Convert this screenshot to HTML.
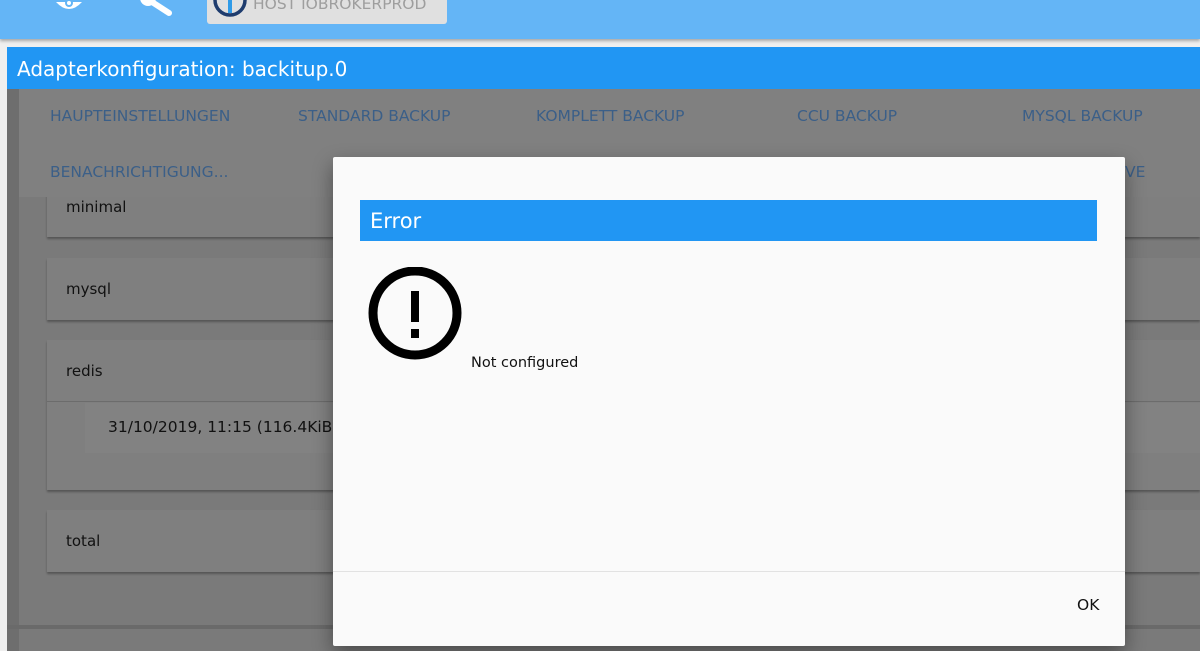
<!DOCTYPE html>
<html><head><meta charset="utf-8"><style>
*{margin:0;padding:0;box-sizing:border-box}
body{width:1200px;height:651px;overflow:hidden;position:relative;background:#efefef;font-family:"DejaVu Sans","Liberation Sans",sans-serif}
.a{position:absolute}
.top{left:0;top:0;width:1200px;height:39px;background:#64b5f6;box-shadow:0 2px 3px rgba(0,0,0,.3)}
.host{left:207px;top:-4px;width:240px;height:28px;background:#e0e0e0;border-radius:3px;color:#9e9e9e;font-size:15.5px;padding-left:46px;line-height:16px}
.hdr{left:7px;top:47px;width:1193px;height:42px;background:#2196f3;color:#fff;font-size:20px;line-height:44px;padding-left:10px}
.body{left:7px;top:89px;width:1193px;height:562px;background:#7a7a7a}
.strip{left:7px;top:89px;width:12px;height:562px;background:#6e6e6e}
.tabs{left:19px;top:89px;width:1181px;height:108px;background:#808080}
.tab{color:#3b5f88;font-size:15.5px}
.card{left:47px;width:1153px;background:#7f7f7f;box-shadow:0 2px 2px rgba(0,0,0,.3);color:#111;font-size:15px;padding-left:19px}
.dlg{left:333px;top:157px;width:792px;height:489px;background:#fafafa;box-shadow:0 8px 20px rgba(0,0,0,.4);border-radius:2px}
</style></head><body>
<div class="a top"></div>
<svg class="a" style="left:54px;top:0" width="30" height="14" viewBox="0 0 30 14"><path d="M2 2 Q15 16 28 2 Z" fill="#fff"/><circle cx="15" cy="3" r="4" fill="#64b5f6"/><circle cx="15" cy="3" r="2" fill="#fff"/></svg>
<svg class="a" style="left:140px;top:0" width="34" height="18" viewBox="0 0 34 18"><circle cx="8" cy="-2" r="8" fill="#fff"/><path d="M12 2 L29 13" stroke="#fff" stroke-width="6" stroke-linecap="round"/></svg>
<div class="a host">HOST IOBROKERPROD</div>
<svg class="a" style="left:213px;top:0" width="36" height="20" viewBox="0 0 36 20"><circle cx="17" cy="0" r="15" fill="none" stroke="#1e3c6e" stroke-width="3.5"/><rect x="15" y="0" width="4" height="13" fill="#2f9be8"/></svg>
<div class="a hdr">Adapterkonfiguration: backitup.0</div>
<div class="a body"></div>
<div class="a strip"></div>
<div class="a" style="left:7px;top:625px;width:1193px;height:4px;background:#6a6a6a"></div>
<div class="a card" style="top:180px;height:57px;padding-top:18px">minimal</div>
<div class="a card" style="top:258px;height:62px;padding-top:22px">mysql</div>
<div class="a card" style="top:340px;height:150px;padding-top:22px">redis</div>
<div class="a" style="left:47px;top:401px;width:1153px;height:1px;background:#6c6c6c"></div>
<div class="a" style="left:85px;top:403px;width:1115px;height:50px;background:#828282;font-size:15.5px;color:#111;padding:15px 0 0 23px">31/10/2019, 11:15 (116.4KiB)</div>
<div class="a card" style="top:510px;height:62px;padding-top:22px">total</div>
<div class="a tabs"></div>
<div class="a tab" style="left:50px;top:107px">HAUPTEINSTELLUNGEN</div>
<div class="a tab" style="left:298px;top:107px">STANDARD BACKUP</div>
<div class="a tab" style="left:536px;top:107px">KOMPLETT BACKUP</div>
<div class="a tab" style="left:797px;top:107px">CCU BACKUP</div>
<div class="a tab" style="left:1022px;top:107px">MYSQL BACKUP</div>
<div class="a tab" style="left:50px;top:163px">BENACHRICHTIGUNG...</div>
<div class="a tab" style="left:1125px;top:163px">VE</div>
<div class="a dlg">
<div class="a" style="left:27px;top:43px;width:737px;height:41px;background:#2196f3;color:#fff;font-size:21px;line-height:42px;padding-left:10px">Error</div>
<svg class="a" style="left:35px;top:110px" width="96" height="96" viewBox="0 0 96 96"><circle cx="47" cy="46" r="42" fill="none" stroke="#000" stroke-width="9"/><rect x="43" y="24" width="8" height="31" fill="#000"/><rect x="43" y="62" width="8" height="9" fill="#000"/></svg>
<div class="a" style="left:138px;top:198px;font-size:14.5px;color:#111">Not configured</div>
<div class="a" style="left:0;top:414px;width:792px;height:1px;background:#e2e2e2"></div>
<div class="a" style="left:744px;top:439px;font-size:15.5px;color:#111">OK</div>
</div>
</body></html>
